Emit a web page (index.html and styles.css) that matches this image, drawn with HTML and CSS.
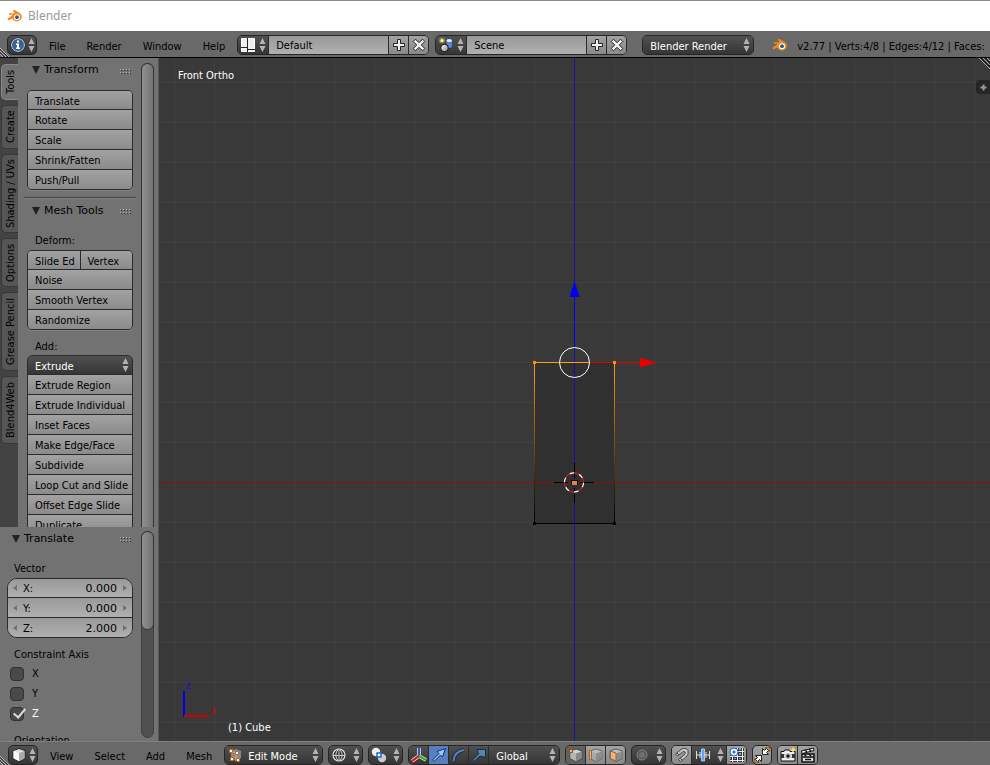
FILE: index.html
```html
<!DOCTYPE html>
<html lang="en">
<head>
<meta charset="utf-8">
<title>Blender</title>
<link rel="stylesheet" href="styles.css">
</head>
<body>
<svg class="defs" aria-hidden="true">
  <defs>
    <linearGradient id="steel" x1="0" y1="0" x2="1" y2="1"><stop offset="0" stop-color="#fff"/><stop offset="1" stop-color="#8a8a8a"/></linearGradient>
    <linearGradient id="edge" gradientUnits="userSpaceOnUse" x1="0" y1="362" x2="0" y2="523"><stop offset="0" stop-color="#ffa010"/><stop offset="1" stop-color="#000"/></linearGradient>
    <pattern id="grid" patternUnits="userSpaceOnUse" x="174" y="82" width="40" height="40"><path d="M0 .5H40M.5 0V40" stroke="#414141"/></pattern>
    <symbol id="updown" viewBox="0 0 7 14"><path d="M3.5 0 6.5 6H.5ZM3.5 14 .5 8H6.5Z" fill="#b4b4b4"/></symbol>
    <symbol id="logo" viewBox="0 0 16 14">
      <path d="M.3 10 5.800 5.800H2V4.200H7.600L5.800 2 7.200.800 13 4.200A5 4.700 0 1 1 5.200 9.600L1.600 11.400Z" fill="#f58a1c"/>
      <circle cx="10" cy="8.200" r="3" fill="#fff"/><circle cx="10" cy="8.200" r="1.900" fill="#1e5a9c"/>
    </symbol>
    <symbol id="plus" viewBox="0 0 16 16"><path d="M6.500 2.500h3v4h4v3h-4v4h-3v-4h-4v-3h4z" fill="#eee" stroke="#222"/></symbol>
    <symbol id="cross" viewBox="0 0 16 16"><path d="M4.500 2.200 8 5.700l3.500-3.500 2.300 2.300L10.300 8l3.500 3.500-2.300 2.300L8 10.300l-3.500 3.500-2.300-2.300L5.700 8 2.200 4.500z" fill="#eee" stroke="#222"/></symbol>
    <symbol id="cube" viewBox="0 0 16 16"><path d="M8 1.500 14 3.500V11.500L8 14.800 2 11.500V3.500Z" fill="#ddd" stroke="#222"/><path d="M2.500 4 8 6V14.300L2.500 11.300Z" fill="#f8f8f8"/><path d="M8 6 13.500 4V11.300L8 14.300Z" fill="#aaa"/></symbol>
    <symbol id="graycube" viewBox="0 0 16 16"><path d="M8 2 14 4V11.500L8 14.500 2 11.500V4Z" fill="#d0d0d0" stroke="#444"/><path d="M2.500 4.500 8 6.500V14L2.500 11.300Z" fill="#b4b4b4"/><path d="M8 6.500 13.500 4.500V11.300L8 14Z" fill="#888"/></symbol>
  </defs>
</svg>

<header class="titlebar"><svg class="i16"><use href="#logo"/></svg><span>Blender</span></header>

<nav class="bar top">
  <svg class="corner" viewBox="0 0 10 11"><path d="M-1 1 9 11M-1 4 6 11M-1 7 3 11" stroke="#bbb"/><path d="M-1 2.500 8 11M-1 5.500 4.500 11" stroke="#222"/></svg>
  <button class="dark editor" aria-label="Info editor">
    <svg class="i16" viewBox="0 0 16 16"><circle cx="8" cy="8" r="6.500" fill="#3a6399" stroke="#dde6f0"/><circle cx="8" cy="8" r="7.300" fill="none" stroke="#222" stroke-width=".6"/><path d="M7 3.500h2v2H7zM6 6.500h3v4h1v1.500H6v-1.500h1V8H6z" fill="#fff"/></svg>
    <svg class="ud"><use href="#updown"/></svg>
  </button>
  <div class="menus"><button>File</button><button>Render</button><button>Window</button><button>Help</button></div>
  <div class="group layouts">
    <button class="dark pick" aria-label="Choose layout">
      <svg class="i16" viewBox="0 0 16 16"><path d="M1.500 1.500h13v13h-13z" fill="#eee" stroke="#fff"/><path d="M7.500 1v14M1 10.500h6M8 12.500h7" stroke="#222"/></svg>
      <svg class="ud"><use href="#updown"/></svg>
    </button>
    <input type="text" value="Default" aria-label="Layout name">
    <button class="light sq" aria-label="Add layout"><svg class="i16"><use href="#plus"/></svg></button>
    <button class="light sq" aria-label="Delete layout"><svg class="i16"><use href="#cross"/></svg></button>
  </div>
  <div class="group scenes">
    <button class="dark pick" aria-label="Choose scene">
      <svg class="i16" viewBox="0 0 16 16"><circle cx="4" cy="3.500" r="3" fill="#8d8a40"/><circle cx="4" cy="3.500" r="1.500" fill="#ffffa8"/><path d="M8.500 3.500V10q3 2 5.500 0V3.500Z" fill="#4f86d6"/><ellipse cx="11.200" cy="3.500" rx="2.800" ry="1.500" fill="#dcebff"/><circle cx="6.500" cy="11" r="3.800" fill="url(#steel)" stroke="#111"/></svg>
      <svg class="ud"><use href="#updown"/></svg>
    </button>
    <input type="text" value="Scene" aria-label="Scene name">
    <button class="light sq" aria-label="Add scene"><svg class="i16"><use href="#plus"/></svg></button>
    <button class="light sq" aria-label="Delete scene"><svg class="i16"><use href="#cross"/></svg></button>
  </div>
  <div class="group drop engine"><select class="dark" aria-label="Render engine"><option>Blender Render</option></select><svg class="ud"><use href="#updown"/></svg></div>
  <svg class="i16 stat-logo"><use href="#logo"/></svg>
  <span class="stats">v2.77 | Verts:4/8 | Edges:4/12 | Faces:</span>
</nav>

<main>
  <aside>
    <section class="shelf">
      <div class="tabs">
        <button class="active">Tools</button><button class="t2">Create</button><button class="t3">Shading / UVs</button><button class="t4">Options</button><button class="t3">Grease Pencil</button><button class="t6">Blend4Web</button>
      </div>
      <div class="panel">
        <h2><i></i>Transform<b></b></h2>
        <div class="stack first">
          <button>Translate</button><button>Rotate</button><button>Scale</button><button>Shrink/Fatten</button><button>Push/Pull</button>
        </div>
        <h2 class="ruled"><i></i>Mesh Tools<b></b></h2>
        <p>Deform:</p>
        <div class="stack">
          <div class="pair"><button>Slide Ed</button><button>Vertex</button></div>
          <button>Noise</button><button>Smooth Vertex</button><button>Randomize</button>
        </div>
        <p>Add:</p>
        <div class="stack">
          <div class="drop"><select class="dark" aria-label="Extrude"><option>Extrude</option></select><svg class="ud"><use href="#updown"/></svg></div>
          <button>Extrude Region</button><button>Extrude Individual</button><button>Inset Faces</button><button>Make Edge/Face</button><button>Subdivide</button><button>Loop Cut and Slide</button><button>Offset Edge Slide</button><button>Duplicate</button>
        </div>
      </div>
      <div class="scroll"><div class="thumb"></div></div>
    </section>
    <section class="operator">
      <div class="panel">
        <h2><i></i>Translate<b></b></h2>
        <p>Vector</p>
        <div class="vector">
          <div><label for="vx">X:</label><input id="vx" type="text" value="0.000"></div>
          <div><label for="vy">Y:</label><input id="vy" type="text" value="0.000"></div>
          <div><label for="vz">Z:</label><input id="vz" type="text" value="2.000"></div>
        </div>
        <p>Constraint Axis</p>
        <div class="checks">
          <label><input type="checkbox">X</label>
          <label><input type="checkbox">Y</label>
          <label class="on"><input type="checkbox" checked>Z</label>
        </div>
        <p>Orientation</p>
      </div>
      <div class="scroll"><div class="thumb short"></div></div>
    </section>
  </aside>

  <div class="view">
    <svg class="scene" viewBox="159 58 831 683" preserveAspectRatio="xMidYMid slice">
      <rect x="-400" y="-400" width="2000" height="2000" fill="url(#grid)"/>
      <rect x="534" y="362" width="81" height="161" fill="#303030"/>
      <rect x="-400" y="482" width="2000" height="1" fill="#8c1010"/>
      <rect x="574" y="-400" width="1" height="2000" fill="#1c10a0"/>
      <path d="M534 362h1v161h-1zM614 362h1v161h-1z" fill="url(#edge)"/>
      <path d="M534 523.500H615" stroke="#000"/>
      <path d="M533 522h3v3h-3zM613 522h3v3h-3z" fill="#000"/>
      <rect x="574" y="296" width="1" height="51" fill="#00f"/>
      <path d="M574.500 281 579.500 297H569.500Z" fill="#00e"/>
      <path d="M590 362.500H641" stroke="#e00000"/>
      <path d="M657 362.500 640 358V367.500Z" fill="#e60000"/>
      <path d="M534 362.500H590" stroke="#ffa010"/>
      <path d="M533 361h3v3h-3zM613 361h3v3h-3z" fill="#ff8c1a"/>
      <circle cx="574.500" cy="362.500" r="15" fill="none" stroke="#fff"/>
      <path d="M554 482.500H568M580 482.500H594M574.500 463V478M574.500 488V503" stroke="#000"/>
      <g fill="none" stroke-width="1.200" stroke-dasharray="5 5"><circle cx="574" cy="482.500" r="9.550" stroke="#fff"/><circle cx="574" cy="482.500" r="9.550" stroke="#f01010" stroke-dashoffset="5"/></g>
      <rect x="571" y="480" width="7" height="5" fill="#111"/><rect x="572" y="481" width="5" height="4" fill="#e08840"/>
      <path d="M184 691V717" stroke="#00e" stroke-width="2"/><path d="M184 716H209" stroke="#d00000" stroke-width="2"/>
    </svg>
    <span class="name">Front Ortho</span>
    <span class="axis z">z</span><span class="axis x">x</span>
    <span class="object">(1) Cube</span>
    <svg class="split" viewBox="0 0 11 12"><path d="M0 0 11 11M4 0 11 7M8 0 11 3" stroke="#aaa"/><path d="M2 0 11 9M6 0 11 5" stroke="#111"/></svg>
    <button class="open" aria-label="Show properties"><svg viewBox="0 0 9 9"><path d="M4.500 1.500V7.500M1.500 4.500H7.500" stroke="#999" stroke-width="2"/></svg></button>
  </div>
</main>

<footer class="bar bottom">
  <svg class="corner" viewBox="0 0 10 11"><path d="M-1 1 9 11M-1 4 6 11M-1 7 3 11" stroke="#bbb"/><path d="M-1 2.500 8 11M-1 5.500 4.500 11" stroke="#222"/></svg>
  <button class="dark editor" aria-label="3D view editor"><svg class="i16"><use href="#cube"/></svg><svg class="ud"><use href="#updown"/></svg></button>
  <div class="menus"><button>View</button><button>Select</button><button>Add</button><button>Mesh</button></div>
  <div class="tools">
    <div class="group drop mode">
      <svg class="i16 lead" viewBox="0 0 16 16"><path d="M8 2 13 4V11L8 14 3 11V4Z" fill="#888"/><path d="M3 4 8 6V14" fill="none" stroke="#bbb"/><g fill="#fff" stroke="#c86410"><path d="M1.500 2.500h3v3h-3zM7.500 4.500h3v3h-3zM2.500 10.500h3v3h-3zM8.500 11.500h3v3h-3z"/></g></svg>
      <select class="dark" aria-label="Mode"><option>Edit Mode</option></select><svg class="ud"><use href="#updown"/></svg>
    </div>
    <button class="dark wide" aria-label="Viewport shading"><svg class="i16" viewBox="0 0 16 16"><circle cx="8" cy="8" r="6" fill="#333" stroke="#ddd" stroke-width="1.200"/><path d="M8 2V14M2 8.500H14M7.500 2Q2 8 7.500 14M8.500 2Q14 8 8.500 14" fill="none" stroke="#ccc"/></svg><svg class="ud"><use href="#updown"/></svg></button>
    <button class="dark wide" aria-label="Pivot point"><svg class="i16" viewBox="0 0 16 16"><circle cx="5" cy="5" r="4.200" fill="#eee"/><circle cx="11" cy="11" r="4.200" fill="#ccc"/><path d="M6 6h4v4H6z" fill="#fff" stroke="#1c66d8" stroke-width="1.500"/></svg><svg class="ud"><use href="#updown"/></svg></button>
    <div class="group">
      <button class="dark sq" aria-label="Manipulator"><svg class="i16" viewBox="0 0 16 16"><g fill="none" stroke-width="3.500" stroke="#fff"><path d="M8 9V1M8 9 1 14M8 9 15 13"/></g><g fill="none" stroke-width="2.200"><path d="M8 9V1" stroke="#2858d0"/><path d="M8 9 1 14" stroke="#d81818"/><path d="M8 9 15 13" stroke="#38a820"/></g></svg></button>
      <button class="sq blue" aria-label="Translate manipulator"><svg class="i16" viewBox="0 0 16 16"><path d="M1.500 13 8 6.500 6 4.500 14.500 1.500 11.500 10 9.500 8 3 14.500Z" fill="#9fc4f2" stroke="#12305c"/></svg></button>
      <button class="dark sq" aria-label="Rotate manipulator"><svg class="i16" viewBox="0 0 16 16"><path d="M2.500 14Q3 4.500 13 3" fill="none" stroke="#142c4c" stroke-width="4"/><path d="M2.500 14Q3 4.500 13 3" fill="none" stroke="#5c80b0" stroke-width="2"/></svg></button>
      <button class="dark sq" aria-label="Scale manipulator"><svg class="i16" viewBox="0 0 16 16"><path d="M1.500 13 7.500 7 6 2.500H14.500V10.500L9 9 3 14.500Z" fill="#5c80b0" stroke="#142c4c"/></svg></button>
      <div class="drop orient"><select class="dark" aria-label="Orientation"><option>Global</option></select><svg class="ud"><use href="#updown"/></svg></div>
    </div>
    <div class="group">
      <button class="sq mid" aria-label="Vertex select"><svg class="i16" viewBox="0 0 16 16"><use href="#graycube" width="16" height="16"/><path d="M1.500 2.500h3v3h-3z" fill="#ffb060" stroke="#a04c00"/></svg></button>
      <button class="light sq" aria-label="Edge select"><svg class="i16" viewBox="0 0 16 16"><use href="#graycube" width="16" height="16" opacity=".6"/><path d="M1.500 3.500h2v9h-2z" fill="#f4b878" stroke="#a06830"/></svg></button>
      <button class="light sq" aria-label="Face select"><svg class="i16" viewBox="0 0 16 16"><use href="#graycube" width="16" height="16" opacity=".7"/><path d="M2.500 4 8 6V14L2.500 11.500Z" fill="#edb478" stroke="#a06830"/></svg></button>
    </div>
    <button class="dark wide" aria-label="Proportional editing"><svg class="i16" viewBox="0 0 16 16"><circle cx="8" cy="8" r="5" fill="#555" stroke="#888"/><circle cx="8" cy="8" r="3" fill="#707070"/></svg><svg class="ud"><use href="#updown"/></svg></button>
    <div class="group">
      <button class="light sq" aria-label="Snap"><svg class="i16" viewBox="0 0 16 16"><path d="M1.500 7 7 2.500Q11.500-.5 14 3.500 15.500 7.500 11.500 10.500L6.500 14.500 4.500 12.500 9.500 8.500Q12 6.500 11 5 10 4 8.500 5L3.500 9Z" fill="#c8c8c8" stroke="#444"/><path d="M3 6 5 8M6 11 8 13" stroke="#444"/></svg></button>
      <button class="dark snap" aria-label="Snap element"><svg class="i16" viewBox="0 0 16 16"><path d="M1.500 4V12M5 5V11M11 5V11M14.500 4V12M1 8H15" stroke="#ddd"/><path d="M6.500 2h3v12h-3z" fill="#58a4ff" stroke="#fff" stroke-width=".6"/></svg><svg class="ud"><use href="#updown"/></svg></button>
      <button class="light sq" aria-label="Align to grid"><svg class="i16" viewBox="0 0 16 16"><path d="M8.500 1V15M13.500 1V15M3.500 9V15M1 9.500H15M1 13.500H15M9 4.500H15" stroke="#222" stroke-width="2.500"/><path d="M8.500 1V15M13.500 1V15M3.500 9V15M1 9.500H15M1 13.500H15M9 4.500H15" stroke="#eee"/><circle cx="5" cy="5" r="4" fill="#e8f4ff" stroke="#2864b8"/><circle cx="5" cy="5" r="1.500" fill="#2870d8"/></svg></button>
    </div>
    <button class="light alone" aria-label="Auto merge"><svg class="i16" viewBox="0 0 16 16"><path d="M12 0h4v4h-4zM0 12h4v4H0z" fill="#e88a30" stroke="#7a4410"/><path d="M8.500 7.500V1.500L10.500 3.500 12.500 1.500 14.500 3.500 12.500 5.500 14.500 7.500ZM7.500 8.500H1.500L3.500 10.500 1.500 12.500 3.500 14.500 5.500 12.500 7.500 14.500Z" fill="#fff" stroke="#222"/></svg></button>
    <div class="group">
      <button class="light sq" aria-label="Render image"><svg class="i16" viewBox="0 0 16 16"><path d="M1 4.500H4L5 3H9L10 4.500H15V14H1Z" fill="#eee" stroke="#111"/><path d="M1 7H15V11H1Z" fill="#333"/><circle cx="8" cy="9" r="3.500" fill="#aaa" stroke="#fff"/><circle cx="8" cy="9" r="1.500" fill="#111"/><path d="M13 0 14 2 16 3 14 4 13 6 12 4 10 3 12 2Z" fill="#ffe650"/></svg></button>
      <button class="light sq" aria-label="Render animation"><svg class="i16" viewBox="0 0 16 16"><path d="M2 7H14V15H2Z" fill="#ddd" stroke="#111" stroke-width="1.500"/><path d="M1.500 4 13.500 1 14 3.500 2 6.500Z" fill="#fff" stroke="#111"/><path d="M5 3 7 5M9 2 11 4M4 7 6 9M9 7 11 9M3 10H14M5 12.500H11" stroke="#111" stroke-width="1.500"/></svg></button>
    </div>
  </div>
</footer>
</body>
</html>
```
FILE: styles.css
```css
* { box-sizing: border-box; }
html, body { height: 100%; }
body {
  margin: 0;
  display: flex;
  flex-direction: column;
  overflow: hidden;
  background: #393939;
  color: #000;
  font: 11px/18px "DejaVu Sans Condensed", "DejaVu Sans", sans-serif;
}
button, input, select { font: inherit; color: inherit; margin: 0; padding: 0; border: 0; border-radius: 0; background: none; outline: 0; }
svg { display: block; flex: none; }
.defs { position: absolute; width: 0; height: 0; }
.i16 { width: 16px; height: 16px; }
.ud { width: 7px; height: 14px; }

.titlebar {
  flex: none;
  display: flex;
  align-items: center;
  gap: 5px;
  height: 31px;
  padding-left: 7px;
  border-top: 1px solid #8a8a8a;
  background: #fff;
  color: #999;
  font: 12px/18px "Noto Sans", "Open Sans", sans-serif;
}

.bar { flex: none; position: relative; display: flex; background: #696969; white-space: nowrap; overflow: hidden; }
.top { height: 27px; padding: 4px 0 0 7px; border-bottom: 1px solid #000; }
.bottom { height: 24px; padding: 3px 0 0 8px; border-top: 1px solid #808080; }
.corner { position: absolute; left: 0; bottom: 0; width: 10px; height: 11px; }

.dark { background: linear-gradient(#505050, #353535); color: #fff; }
.light { background: linear-gradient(#a2a2a2, #8a8a8a); }
.mid { background: #626262; }
.blue { background: #5680c2; }
.editor, .wide, .alone, .group { border: 1px solid #252525; border-radius: 5px; height: 20px; flex: none; }
.editor, .wide, .pick, .snap, .sq, .alone { display: flex; align-items: center; justify-content: center; }
.editor { width: 30px; gap: 2px; }
.wide { width: 35px; gap: 6px; }
.alone { width: 20px; }
.group { display: flex; overflow: hidden; }
.group > * + * { border-left: 1px solid #2b2b2b; }
.sq { width: 20px; }
.group > .sq:first-child { width: 19px; }
.pick { width: 30px; gap: 3px; }
.snap { width: 35px; gap: 6px; }
.group input { width: 120px; padding: 2px 0 0 7px; background: linear-gradient(#999, #b0b0b0); }
.layouts { margin-left: 12px; }
.scenes { margin-left: 6px; }
.engine { width: 112px; margin-left: 15px; }
.drop { position: relative; display: flex; }
.drop select { appearance: none; flex: 1; min-width: 0; height: 18px; padding: 2px 0 0 7px; border: 0; }
.drop .ud { position: absolute; right: 3px; top: 2px; border: 0; }
.menus { display: flex; gap: 21px; margin-left: 12px; padding-top: 2px; }
.menus button { height: 20px; }
.stat-logo { margin: 2px 0 0 18px; }
.stats { margin: 3px 0 0 9px; }
.tools { display: flex; gap: 5px; margin-left: 12px; }
.mode { width: 99px; }
.drop.mode select { padding-left: 23px; }
.lead { position: absolute; left: 3px; top: 1px; pointer-events: none; }
.group > .lead + select { border-left: 0; }
.orient { width: 71px; }

main { flex: 1; min-height: 0; display: flex; }
aside { flex: none; width: 159px; display: flex; flex-direction: column; background: #727272; border-right: 1px solid #555; }
.shelf { flex: 1; min-height: 0; display: flex; overflow: hidden; }
.operator { flex: none; display: flex; height: 214px; overflow: hidden; }

.tabs { width: 18px; flex: none; display: flex; flex-direction: column; gap: 5px; padding: 6px 0 0 1px; background: #434343; }
.tabs button {
  writing-mode: vertical-rl;
  transform: rotate(180deg);
  height: 36px;
  width: 17px;
  flex: none;
  line-height: 17px;
  text-align: center;
  background: #565656;
  border: 1px solid #383838;
  border-left: 0;
  border-radius: 0 5px 5px 0;
}
.tabs .active { background: #727272; border-color: #8a8a8a; }
.tabs .t2 { height: 44px; }
.tabs .t3 { height: 79px; }
.tabs .t4 { height: 49px; }
.tabs .t6 { height: 68px; }

.panel { flex: 1; min-width: 0; padding: 0 8px 0 9px; }
.operator .panel { padding-left: 7px; }
h2 { display: flex; align-items: center; gap: 4px; height: 24px; margin: 0 0 0 5px; font: 11px/18px "DejaVu Sans", sans-serif; }
.operator h2 { height: 23px; }
.operator h2 + p { margin-top: 2px; }
h2 i { border: 4px solid transparent; border-top: 8px solid #222; border-bottom: 0; }
h2 b { width: 11px; height: 5px; margin: 2px 2px 0 auto; background: repeating-linear-gradient(90deg, #bbb 0 1px, transparent 1px 3px) 0 0 / 11px 1px repeat-x, repeating-linear-gradient(90deg, #333 0 1px, transparent 1px 3px) 1px 1px / 11px 1px repeat-x, repeating-linear-gradient(90deg, #bbb 0 1px, transparent 1px 3px) 0 3px / 11px 1px repeat-x, repeating-linear-gradient(90deg, #333 0 1px, transparent 1px 3px) 1px 4px / 11px 1px repeat-x; }
.ruled { height: 26px; margin: 7px -3px 0; padding: 0 3px 0 8px; border-top: 1px solid #444; box-shadow: inset 0 1px #858585; }
p { margin: 0; height: 26px; padding: 8px 0 0 8px; line-height: 18px; white-space: nowrap; }
.operator p { padding-left: 7px; }
.ruled + p { margin-top: 1px; }
.stack + p { height: 25px; }
.stack { display: flex; flex-direction: column; border: 1px solid #2b2b2b; border-radius: 5px; overflow: hidden; box-shadow: 0 1px #808080; }
.stack.first { margin-top: 8px; }
.stack > * { height: 20px; border-top: 1px solid #2b2b2b; flex: none; }
.stack > :first-child { height: 18px; border-top: 0; }
.stack button { background: linear-gradient(#a2a2a2, #8b8b8b); text-align: left; padding: 2px 0 0 7px; white-space: nowrap; overflow: hidden; }
.pair { display: flex; }
.pair button { flex: 1; }
.pair button + button { border-left: 1px solid #2b2b2b; }

.vector { border: 1px solid #2b2b2b; border-radius: 10px; overflow: hidden; background: #aaa; }
.vector div { display: flex; align-items: center; height: 20px; padding: 0 5px; border-top: 1px solid #2b2b2b; background: linear-gradient(#999, #b0b0b0); }
.vector div:first-child { height: 18px; border: 0; }
.vector div::before, .vector div::after { content: ""; border: 3px solid transparent; border-left: 0; border-right: 4px solid #707070; }
.vector div::after { transform: rotate(180deg); }
.vector label { margin-left: 6px; padding-top: 2px; }
.vector input { flex: 1; min-width: 0; text-align: right; padding: 2px 6px 0 0; font-family: "DejaVu Sans", sans-serif; }
.checks { display: flex; flex-direction: column; padding: 0 0 0 3px; }
.checks label { display: flex; align-items: center; gap: 8px; height: 20px; }
.checks .on { color: #fff; }
.checks input { appearance: none; width: 14px; height: 14px; position: relative; border: 1px solid #303030; border-radius: 4px; background: #494949; }
.checks input:checked::after { content: ""; position: absolute; left: 5px; top: -2px; width: 5px; height: 10px; border: solid #ddd; border-width: 0 2px 2px 0; transform: rotate(40deg); }

.scroll { flex: none; width: 13px; margin: 4px 4px 3px 0; border-radius: 7px; background: #505050; border: 1px solid #404040; }
.shelf .scroll { margin: 5px 4px -12px 0; }
.thumb { height: 100%; border-radius: 6px; background: linear-gradient(90deg, #909090, #747474); box-shadow: 0 0 0 1px #333; }
.short { height: 97px; }

.view { flex: 1; min-width: 0; position: relative; overflow: hidden; background: #393939; color: #fff; }
.scene { width: 100%; height: 100%; }
.name, .object, .axis, .split, .open { position: absolute; }
.name { left: 19px; top: 9px; }
.object { left: 69px; bottom: 4px; }
.axis { font-size: 10px; line-height: 10px; }
.z { left: 27px; bottom: 50px; color: #1010e0; }
.x { left: 52px; bottom: 25px; color: #d00000; }
.split { right: 0; top: 0; width: 11px; height: 12px; }
.open { right: 0; top: 22px; width: 14px; height: 14px; padding: 3px; border-radius: 4px 0 0 4px; background: #262626; }
.open svg { width: 9px; height: 9px; }
```
